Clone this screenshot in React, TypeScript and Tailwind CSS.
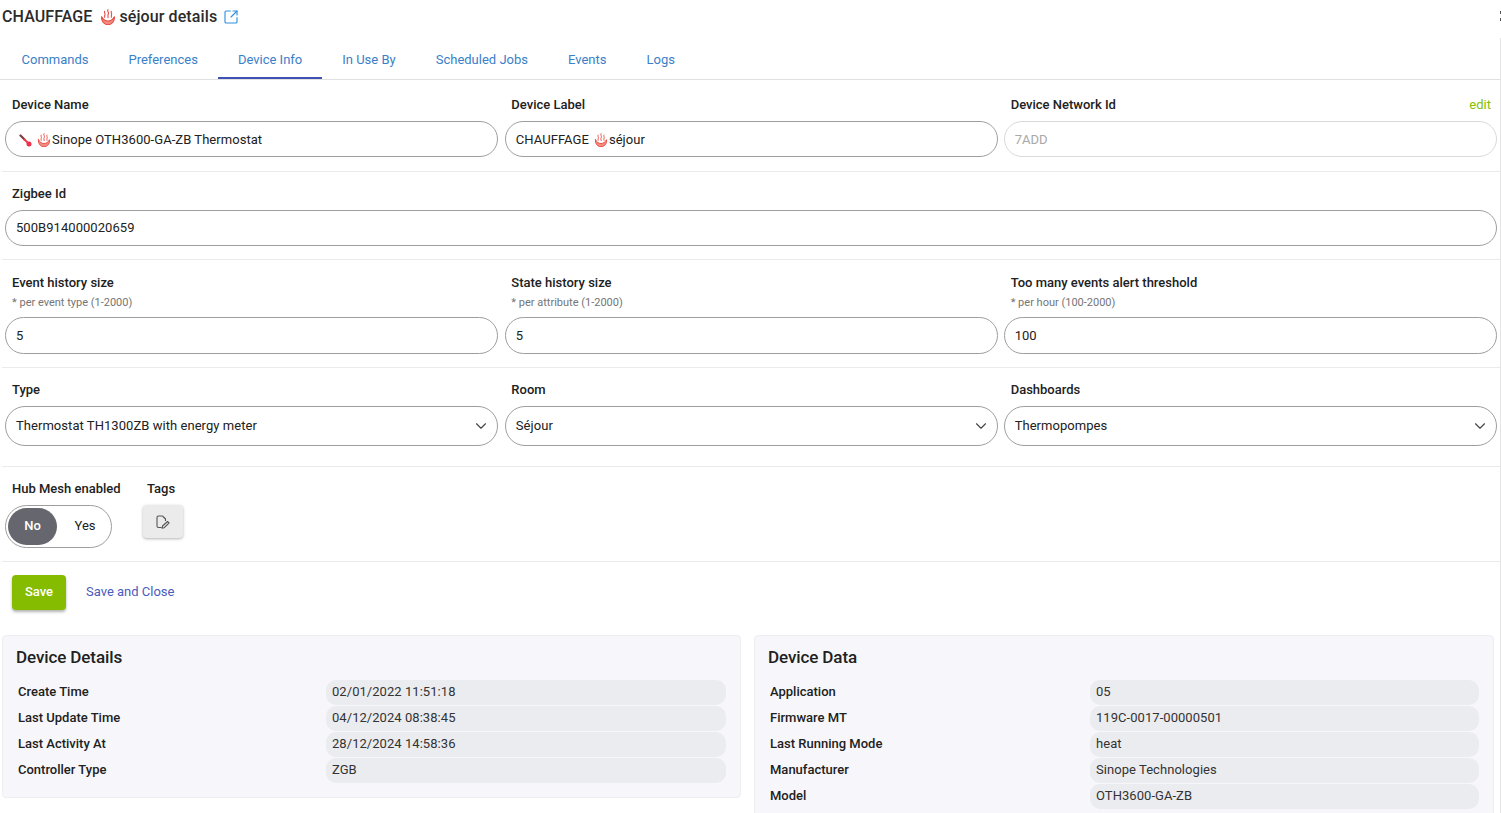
import React from "react";
import { ChevronDown, SquareArrowOutUpRight } from "lucide-react";

function Flame({ className }: { className: string }) {
  return (
    <svg className={className} viewBox="0 0 24 24" fill="none" stroke="#e8493f" strokeWidth="1.600" strokeLinecap="round">
      <path d="M7 3.500c-1.600 2 1.600 3.200.3 5.600-.5 1.100-.7 2-.2 3.400" />
      <path d="M12 1c-1.800 2.400 1.800 3.800.4 6.800-.6 1.500-.8 3-.2 5.200" />
      <path d="M17 3.500c-1.600 2 1.600 3.200.3 5.600-.5 1.100-.7 2-.2 3.400" />
      <path d="M2.500 11.500c-1 6.500 3.500 12 9.500 12s10.500-5.500 9.500-12c-2 4-5.500 6.500-9.500 6.500s-7.500-2.500-9.500-6.500Z" fill="#f28b82" strokeLinejoin="round" />
    </svg>
  );
}

function Thermometer() {
  return (
    <svg className="h-[13px] w-[13px] shrink-0" viewBox="0 0 13 13" fill="none" strokeLinecap="round">
      <path d="M1.500 1.500 5.500 5.500" stroke="#7d3c3c" strokeWidth="2.200" />
      <path d="M5.500 5.500 9 9" stroke="#ee3a4e" strokeWidth="2" />
      <circle cx="10" cy="10" r="2.500" fill="#f0304a" />
    </svg>
  );
}

function FileEdit() {
  return (
    <svg className="h-[14px] w-[14px]" viewBox="0 0 14 14" fill="none" stroke="#555" strokeWidth="1.100" strokeLinejoin="round">
      <path d="M6.500 1H2.500Q1 1 1 2.500V11Q1 12.500 2.500 12.500H5.500" />
      <path d="M6.500 1 9.500 4V6" />
      <path d="M11.500 6.500 13 8 8 12.800 6 13.200 6.500 11Z" />
    </svg>
  );
}

function Label({ children, className = "pl-[7px]" }: { children: React.ReactNode; className?: string }) {
  return <div className={`${className} h-[17px] text-[13px] leading-[17px] font-medium text-[#212121]`}>{children}</div>;
}

function Hint({ children, className = "pl-[7px]" }: { children: React.ReactNode; className?: string }) {
  return <div className={`${className} mt-[3px] mb-[6px] h-[17px] text-[11px] leading-[17px] text-[#757575]`}>{children}</div>;
}

function Field({ children, className = "h-9", disabled }: { children: React.ReactNode; className?: string; disabled?: boolean }) {
  return (
    <div
      className={`${className} flex w-full items-center rounded-full border bg-white pl-[10px] pr-2 text-[13px] tracking-[0.05px] ${
        disabled ? "border-[#d9d9d9] text-[#a8a8a8]" : "border-[#9e9e9e] text-[#212121]"
      }`}
    >
      {children}
    </div>
  );
}

function SelectBox({ value }: { value: string }) {
  return (
    <div className="flex h-10 w-full items-center justify-between rounded-full border border-[#9e9e9e] bg-white pl-[10px] pr-[7px] text-[13px] tracking-[0.05px] text-[#212121]">
      <span>{value}</span>
      <ChevronDown className="h-[18px] w-[18px] text-[#444]" strokeWidth={1.5} />
    </div>
  );
}

const tabs = ["Commands", "Preferences", "Device Info", "In Use By", "Scheduled Jobs", "Events", "Logs"];

const details = [
  ["Create Time", "02/01/2022 11:51:18"],
  ["Last Update Time", "04/12/2024 08:38:45"],
  ["Last Activity At", "28/12/2024 14:58:36"],
  ["Controller Type", "ZGB"],
];

const deviceData = [
  ["Application", "05"],
  ["Firmware MT", "119C-0017-00000501"],
  ["Last Running Mode", "heat"],
  ["Manufacturer", "Sinope Technologies"],
  ["Model", "OTH3600-GA-ZB"],
];

function InfoCard({ title, rows, className, labelWidth }: { title: string; rows: string[][]; className: string; labelWidth: string }) {
  return (
    <div className={`${className} rounded-[4px] border border-[#eeeef2] bg-[#f7f7fb] pt-[9px] pr-[14px] pl-[13px]`}>
      <h2 className="h-[24px] text-[17px] leading-[24px] font-medium text-[#212121] tracking-[-0.1px]">{title}</h2>
      <div className="mt-[11px] flex flex-col gap-px">
        {rows.map(([k, v]) => (
          <div key={k} className="flex h-[25px] items-center">
            <div className={`${labelWidth} pb-[2px] pl-[2px] text-[13px] font-medium text-[#212121]`}>{k}</div>
            <div className="flex h-[25px] flex-1 items-center rounded-[10px] bg-[#ebecf0] pb-[2px] pl-[6px] text-[13px] tracking-[0.05px] text-[#333]">{v}</div>
          </div>
        ))}
      </div>
    </div>
  );
}

export default function App() {
  return (
    <div className="relative h-[813px] w-[1501px] overflow-hidden bg-white font-['Roboto',sans-serif]">
      {/* scrollbar edge + clipped close button */}
      <div className="absolute top-[38px] right-0 bottom-0 w-px bg-[#e4e4e4]" />
      <div className="absolute top-[11px] right-0 h-[3px] w-px bg-[#555]" />
      <div className="absolute top-[18px] right-0 h-[3px] w-px bg-[#555]" />

      <div className="flex h-[33px] items-center pl-[2px] text-[16px] font-medium text-[#2b2b2b] tracking-[0.1px]">
        <span>CHAUFFAGE</span>
        <Flame className="mr-[3px] ml-[8px] h-[16px] w-[16px]" />
        <span>séjour details</span>
        <SquareArrowOutUpRight className="ml-[6px] h-[16px] w-[16px] text-[#2f8fe0]" strokeWidth={1.7} />
      </div>

      <div className="flex h-[47px] border-b border-[#e0e0e0] pl-[1.500px]">
        {tabs.map((t) => (
          <div
            key={t}
            className={`flex h-[46px] items-center border-b-2 px-[20px] pt-[9px] text-[13px] text-[#3a80c8] ${
              t === "Device Info" ? "border-[#3f51b5]" : "border-transparent"
            }`}
          >
            {t}
          </div>
        ))}
      </div>

      <section className="mr-[1px] ml-[2px] border-b border-[#eaeaea] pt-[16px] pb-[14px]">
        <div className="grid grid-cols-3">
          <div className="px-[3px]">
            <Label>Device Name</Label>
            <div className="mt-2">
              <Field>
                <span className="ml-[3px] flex items-center pt-[2px]">
                  <Thermometer />
                  <Flame className="mr-[1px] ml-[5px] h-[14px] w-[14px]" />
                  Sinope OTH3600-GA-ZB Thermostat
                </span>
              </Field>
            </div>
          </div>
          <div className="pr-[3px] pl-[3.500px]">
            <Label className="pl-[6.500px]">Device Label</Label>
            <div className="mt-2">
              <Field>
                <span className="flex items-center pt-[2px]">
                  CHAUFFAGE
                  <Flame className="mr-[1px] ml-[5px] h-[14px] w-[14px]" />
                  séjour
                </span>
              </Field>
            </div>
          </div>
          <div className="px-[3px]">
            <div className="flex items-center justify-between pr-[6px]">
              <Label>Device Network Id</Label>
              <span className="text-[13px] leading-[17px] text-[#84c000]">edit</span>
            </div>
            <div className="mt-2">
              <Field disabled>
                <span className="pt-[1px]">7ADD</span>
              </Field>
            </div>
          </div>
        </div>
      </section>

      <section className="mr-[1px] ml-[2px] border-b border-[#eaeaea] px-[3px] pt-[13px] pb-[13px]">
        <Label>Zigbee Id</Label>
        <div className="mt-2">
          <Field>500B914000020659</Field>
        </div>
      </section>

      <section className="mr-[1px] ml-[2px] border-b border-[#eaeaea] pt-[14px] pb-[13px]">
        <div className="grid grid-cols-3">
          <div className="px-[3px]">
            <Label>Event history size</Label>
            <Hint>* per event type (1-2000)</Hint>
            <Field className="h-[37px]">5</Field>
          </div>
          <div className="pr-[3px] pl-[3.500px]">
            <Label className="pl-[6.500px]">State history size</Label>
            <Hint className="pl-[6.500px]">* per attribute (1-2000)</Hint>
            <Field className="h-[37px]">5</Field>
          </div>
          <div className="px-[3px]">
            <Label>Too many events alert threshold</Label>
            <Hint>* per hour (100-2000)</Hint>
            <Field className="h-[37px]">100</Field>
          </div>
        </div>
      </section>

      <section className="mr-[1px] ml-[2px] border-b border-[#eaeaea] pt-[13px] pb-[20px]">
        <div className="grid grid-cols-3">
          <div className="px-[3px]">
            <Label>Type</Label>
            <div className="mt-2">
              <SelectBox value="Thermostat TH1300ZB with energy meter" />
            </div>
          </div>
          <div className="pr-[3px] pl-[3.500px]">
            <Label className="pl-[6.500px]">Room</Label>
            <div className="mt-2">
              <SelectBox value="Séjour" />
            </div>
          </div>
          <div className="px-[3px]">
            <Label>Dashboards</Label>
            <div className="mt-2">
              <SelectBox value="Thermopompes" />
            </div>
          </div>
        </div>
      </section>

      <section className="mr-[1px] ml-[2px] flex border-b border-[#eaeaea] pt-[13px] pb-[13px] pl-[3px]">
        <div className="w-[142px]">
          <Label>Hub Mesh enabled</Label>
          <div className="mt-2 flex h-[43px] w-[107px] items-center rounded-full border border-[#9e9e9e] bg-white pl-[2px] text-[13px]">
            <div className="flex h-[37px] w-[49px] items-center justify-center rounded-full bg-[#66666e] pb-[2px] font-medium text-white">No</div>
            <div className="flex-1 pb-[2px] pl-[2px] text-center text-[#212121]">Yes</div>
          </div>
        </div>
        <div>
          <div className="h-[17px] text-[13px] leading-[17px] font-medium text-[#212121]">Tags</div>
          <div className="mt-2 -ml-[4px] flex h-[33px] w-[40px] items-center justify-center rounded-[4px] bg-[#ebebeb] shadow-[0_1px_3px_rgba(0,0,0,0.3)]">
            <FileEdit />
          </div>
        </div>
      </section>

      <div className="flex h-[73px] items-start pt-[13px] pl-[12px]">
        <div className="flex h-[35px] w-[54px] items-center justify-center rounded-[4px] bg-[#85bc00] pb-[2px] text-[13px] font-medium text-white shadow-[0_2px_3px_rgba(0,0,0,0.3)]">
          Save
        </div>
        <div className="ml-[20px] flex h-[35px] items-center pb-[2px] text-[13px] text-[#4a5bbd]">Save and Close</div>
      </div>

      <div className="flex items-start pl-[2px]">
        <InfoCard title="Device Details" rows={details} className="h-[163px] w-[739px]" labelWidth="w-[310px]" />
        <InfoCard title="Device Data" rows={deviceData} className="ml-[13px] h-[200px] w-[740px]" labelWidth="w-[322px]" />
      </div>
    </div>
  );
}
